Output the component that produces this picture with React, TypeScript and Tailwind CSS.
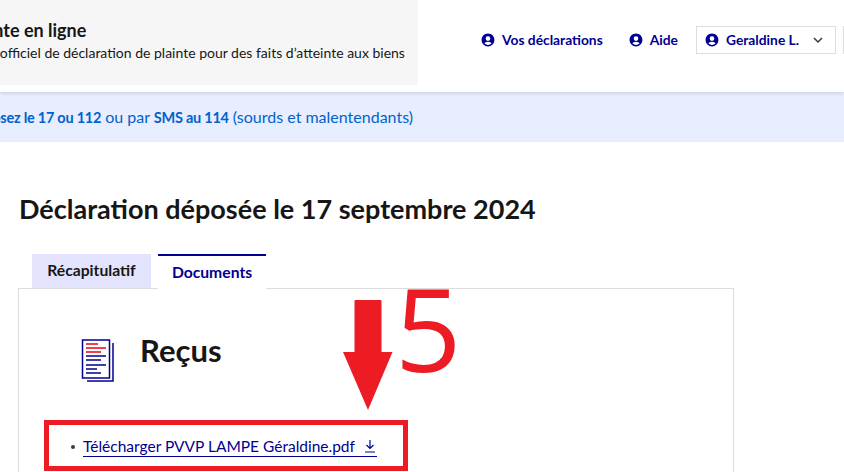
function UserIcon() {
  return (
    <svg width="14" height="14" viewBox="0 0 24 24" className="shrink-0" fill="#000091">
      <path d="M12 1C5.900 1 1 5.900 1 12s4.900 11 11 11 11-4.900 11-11S18.100 1 12 1Zm0 4.500a4 4 0 1 1 0 8 4 4 0 0 1 0-8Zm-6.200 12.200c.9-1.400 3-2.700 6.200-2.700s5.300 1.300 6.200 2.700A8.500 8.500 0 0 1 12 20.500a8.500 8.500 0 0 1-6.200-2.800Z" fillRule="evenodd" />
    </svg>
  );
}

function NavLink({ label }: { label: string }) {
  return (
    <span className="flex items-center gap-[7px] text-[13.800px] font-bold text-[#000091]">
      <UserIcon />
      {label}
    </span>
  );
}

function DocIcon() {
  return (
    <svg width="34" height="44" viewBox="0 0 34 44" className="shrink-0" fill="none">
      <path d="M32 4v38H6" stroke="#000091" strokeWidth="1.500" />
      <rect x="1.500" y="1" width="27" height="38" stroke="#000091" strokeWidth="1.500" fill="#fff" />
      <path d="M5 5h12M5 9h20M5 13h15" stroke="#f00010" strokeWidth="1.500" />
      <path d="M5 17h20M5 21h15M5 26h20M5 30h11M5 34h15" stroke="#000091" strokeWidth="1.500" />
    </svg>
  );
}

export default function App() {
  return (
    <div className="relative h-[472px] w-[844px] overflow-hidden bg-white font-['Lato',sans-serif] text-[#161616]">
      <header className="relative z-10 flex h-[92px] items-start bg-white shadow-[0_1px_4px_rgba(0,0,18,0.16)]">
        <div className="h-[85px] w-[418px] shrink-0 overflow-hidden bg-[#f6f6f6] pt-[20px]">
          <div className="ml-[-27px] whitespace-nowrap">
            <div className="ml-[-9px] text-[18px] leading-[20px] font-bold">Plainte en ligne</div>
            <div className="mt-[3px] text-[14px] leading-[20px]">Site officiel de déclaration de plainte pour des faits d’atteinte aux biens</div>
          </div>
        </div>
        <nav className="ml-[63px] flex h-[80px] items-center whitespace-nowrap">
          <NavLink label="Vos déclarations" />
          <div className="ml-[26px]">
            <NavLink label="Aide" />
          </div>
          <div className="ml-[18px] flex h-[28px] w-[140px] items-center justify-between border border-[#dddddd] pr-[12px] pl-[8px]">
            <NavLink label="Geraldine L." />
            <svg width="10" height="7" viewBox="0 0 10 7" fill="none" stroke="#3a3a3a" strokeWidth="1.500">
              <path d="M1 1l4 4 4-4" />
            </svg>
          </div>
          <div className="ml-[7px] h-[28px] w-[10px] shrink-0 border border-[#dddddd]" />
        </nav>
      </header>

      <div className="flex h-[50px] items-center justify-end whitespace-nowrap bg-[#e8edff] pr-[431px] text-[16px] text-[#0063cb]">
        <span>
          <b className="text-[14.500px] tracking-[-0.25px]">Composez le 17 ou 112</b> ou par <b className="text-[14.500px] tracking-[-0.25px]">SMS au 114</b> (sourds et malentendants)
        </span>
      </div>

      <main className="pl-[18px]">
        <h1 className="mt-[50px] ml-[1px] text-[27px] leading-[34px] font-bold">Déclaration déposée le 17 septembre 2024</h1>
        <div className="mt-[27px] ml-[14px] flex h-[35px] items-end gap-[7px] text-[15.700px] font-bold">
          <div className="flex h-[34px] w-[119px] items-center justify-center bg-[#e3e3fd]">Récapitulatif</div>
          <div className="relative z-10 -mb-px flex h-[35px] w-[108px] items-center justify-center border-t-2 border-[#000091] bg-white text-[#000091]">
            Documents
          </div>
        </div>
        <section className="h-[200px] w-[716px] border border-[#dddddd] pt-[50px] pl-[62px]">
          <div className="flex items-start gap-[25px]">
            <DocIcon />
            <h2 className="-mt-[7px] text-[31px] leading-[36px] font-bold">Reçus</h2>
          </div>
          <ul className="mt-[53px] -ml-[10px] text-[15.500px] leading-[20px]">
            <li className="flex items-center">
              <span className="mr-[8px] h-[4px] w-[4px] rounded-full bg-[#3a3a3a]" />
              <span className="flex items-center gap-[8px] border-b border-[#000091] text-[#000091]">
                Télécharger PVVP LAMPE Géraldine.pdf
                <svg width="14" height="14" viewBox="0 0 14 14" fill="none" stroke="#000091" strokeWidth="1.200">
                  <path d="M7 1v8.500M3.500 6l3.500 3.500L10.500 6M2 13h10" />
                </svg>
              </span>
            </li>
          </ul>
        </section>
      </main>

      <svg className="absolute top-[299px] left-[342px]" width="52" height="112" viewBox="0 0 52 112" fill="#ed1c24">
        <path d="M12.500 2a1 1 0 0 1 1-1h25a1 1 0 0 1 1 1v51h11L26 111 1 53h11.500Z" />
      </svg>
      <span className="absolute top-[257px] left-[395px] font-['Open_Sans',sans-serif] text-[116px] leading-[140px] font-normal text-[#ed1c24]">5</span>
      <div className="absolute top-[420px] left-[44px] h-[51px] w-[364px] border-[5px] border-[#ed1c24]" />
    </div>
  );
}
